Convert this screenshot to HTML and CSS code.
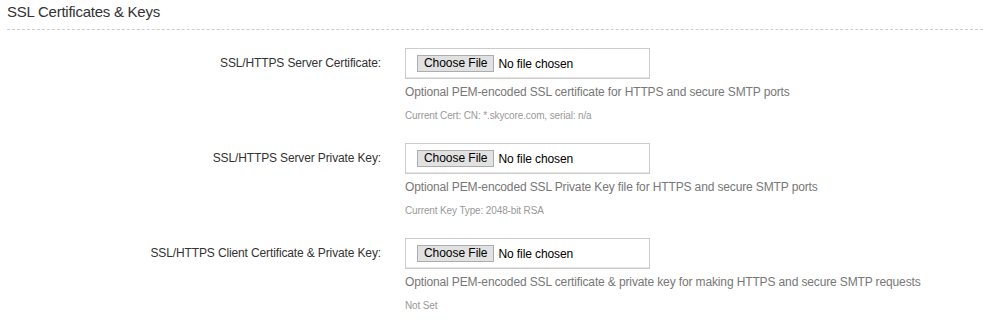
FILE: index.html
```html
<!DOCTYPE html>
<html>
<head>
<meta charset="utf-8">
<link rel="stylesheet" href="styles.css">
</head>
<body>
<div class="section">
  <h3 class="section-title">SSL Certificates &amp; Keys</h3>
  <div class="form">
    <div class="row">
      <label class="row-label">SSL/HTTPS Server Certificate:</label>
      <div class="row-field">
        <div class="file-box"><span class="file-btn">Choose File</span><span class="file-name">No file chosen</span></div>
        <p class="help">Optional PEM-encoded SSL certificate for HTTPS and secure SMTP ports</p>
        <p class="note">Current Cert: CN: *.skycore.com, serial: n/a</p>
      </div>
    </div>
    <div class="row">
      <label class="row-label">SSL/HTTPS Server Private Key:</label>
      <div class="row-field">
        <div class="file-box"><span class="file-btn">Choose File</span><span class="file-name">No file chosen</span></div>
        <p class="help">Optional PEM-encoded SSL Private Key file for HTTPS and secure SMTP ports</p>
        <p class="note">Current Key Type: 2048-bit RSA</p>
      </div>
    </div>
    <div class="row">
      <label class="row-label">SSL/HTTPS Client Certificate &amp; Private Key:</label>
      <div class="row-field">
        <div class="file-box"><span class="file-btn">Choose File</span><span class="file-name">No file chosen</span></div>
        <p class="help">Optional PEM-encoded SSL certificate &amp; private key for making HTTPS and secure SMTP requests</p>
        <p class="note">Not Set</p>
      </div>
    </div>
  </div>
</div>
</body>
</html>
```
FILE: styles.css
```css
html, body {
  margin: 0;
  padding: 0;
  background: #fff;
}
body {
  font-family: "Liberation Sans", Arial, sans-serif;
  color: #333;
  font-size: 12px;
  letter-spacing: -0.13px;
}
.section {
  padding: 0 1px 0 7px;
}
.section-title {
  margin: 0;
  padding-top: 3px;
  height: 30px;
  box-sizing: border-box;
  font-size: 15px;
  font-weight: normal;
  line-height: 18px;
  letter-spacing: -0.25px;
  color: #333;
  border-bottom: 1px dashed #ccc;
}
.form {
  padding-top: 18px;
}
.row {
  display: grid;
  grid-template-columns: 374px 1fr;
  column-gap: 24px;
  height: 95px;
}
.row-label {
  text-align: right;
  line-height: 16px;
  padding-top: 7px;
}
.file-box {
  width: 245px;
  height: 31px;
  box-sizing: border-box;
  border: 1px solid #ccc;
  box-shadow: inset 0 -1px 0 #e6e6e6;
  display: flex;
  align-items: center;
  padding-left: 11px;
  letter-spacing: 0;
}
.file-btn {
  box-sizing: border-box;
  height: 17px;
  padding: 0 6px;
  line-height: 15px;
  border: 1px solid #adadad;
  background: #e1e1e1;
  color: #000;
  letter-spacing: -0.05px;
}
.file-name {
  margin-left: 4px;
  color: #000;
  letter-spacing: -0.1px;
}
.help {
  margin: 5px 0 0;
  line-height: 16px;
  color: #777;
}
.note {
  margin: 10px 0 0;
  font-size: 10px;
  line-height: 12px;
  color: #999;
}
```
